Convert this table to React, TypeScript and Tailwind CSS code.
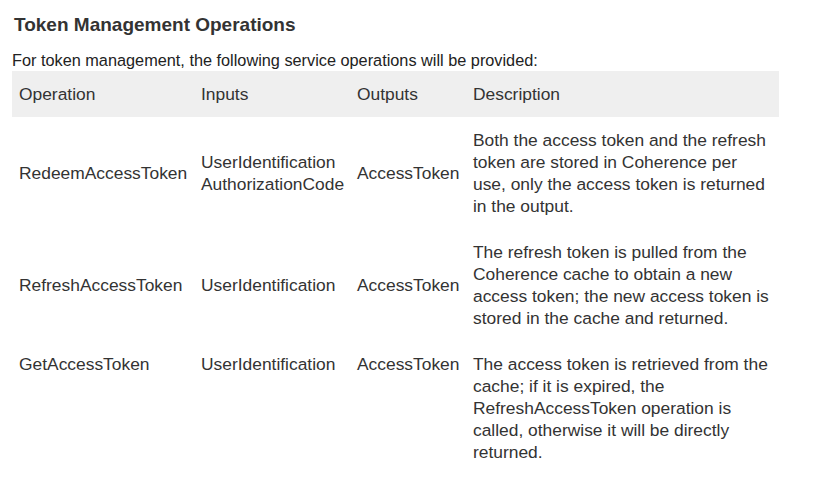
const rows = [
  {
    op: "RedeemAccessToken",
    inputs: ["UserIdentification", "AuthorizationCode"],
    outputs: "AccessToken",
    desc: "Both the access token and the refresh token are stored in Coherence per use, only the access token is returned in the output.",
    top: false,
  },
  {
    op: "RefreshAccessToken",
    inputs: ["UserIdentification"],
    outputs: "AccessToken",
    desc: "The refresh token is pulled from the Coherence cache to obtain a new access token; the new access token is stored in the cache and returned.",
    top: false,
  },
  {
    op: "GetAccessToken",
    inputs: ["UserIdentification"],
    outputs: "AccessToken",
    desc: "The access token is retrieved from the cache; if it is expired, the RefreshAccessToken operation is called, otherwise it will be directly returned.",
    top: true,
  },
];

const App = () => {
  return (
    <div className="min-h-[481px] bg-white pt-[14px] px-[12px] font-['Liberation_Sans',Arial,sans-serif] text-[#333]">
      <h2 className="pl-[2px] text-[19px] leading-[22px] font-bold text-[#333]">Token Management Operations</h2>
      <p className="mt-[15px] text-[16.3px] leading-[18px] text-[#222]">
        For token management, the following service operations will be provided:
      </p>
      <table className="mt-[2px] w-[767px] table-fixed border-collapse text-[17.4px] leading-[22px] text-[#333]">
        <colgroup>
          <col className="w-[182px]" />
          <col className="w-[156px]" />
          <col className="w-[116px]" />
          <col className="w-[313px]" />
        </colgroup>
        <thead>
          <tr className="bg-[#efefef]">
            <th className="px-[7px] py-[12px] text-left font-normal">Operation</th>
            <th className="px-[7px] py-[12px] text-left font-normal">Inputs</th>
            <th className="px-[7px] py-[12px] text-left font-normal">Outputs</th>
            <th className="px-[7px] py-[12px] text-left font-normal">Description</th>
          </tr>
        </thead>
        <tbody>
          {rows.map((r) => {
            const cell = r.top ? "px-[7px] py-[12px] align-top" : "px-[7px] py-[12px] align-middle";
            return (
              <tr key={r.op}>
                <td className={cell}>{r.op}</td>
                <td className={cell}>
                  {r.inputs.map((i) => (
                    <div key={i}>{i}</div>
                  ))}
                </td>
                <td className={cell}>{r.outputs}</td>
                <td className={cell}>{r.desc}</td>
              </tr>
            );
          })}
        </tbody>
      </table>
    </div>
  );
};

export default App;
